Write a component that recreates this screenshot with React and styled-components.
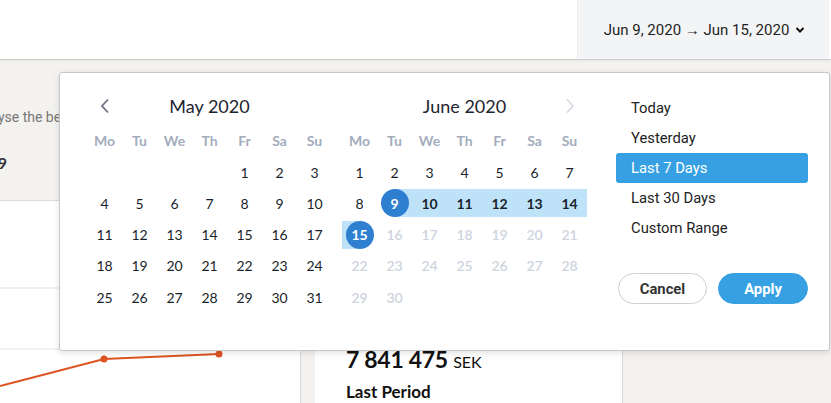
import React from "react";
import styled, { createGlobalStyle, css } from "styled-components";

const Global = createGlobalStyle`
  html, body { margin: 0; padding: 0; }
  body { background: #f4f2ee; font-family: Roboto, "Noto Sans", sans-serif; overflow: hidden; }
  * { box-sizing: border-box; }
`;

const Page = styled.div`
  position: relative;
  width: 831px;
  height: 403px;
  overflow: hidden;
  background: #f4f2ee;
`;

const Header = styled.header`
  height: 60px;
  background: #fff;
  border-bottom: 1px solid #cfcfcf;
  box-shadow: 0 1px 2px rgba(0,0,0,0.06);
  display: flex;
  justify-content: flex-end;
  padding-right: 2px;
`;

const DateToggle = styled.div`
  width: 252px;
  background: #f3f4f6;
  border-left: 1px solid #ececec;
  display: flex;
  align-items: center;
  justify-content: center;
  gap: 6px;
  font-family: Roboto, sans-serif;
  font-size: 15px;
  color: #1f1f1f;
  padding-left: 2px;
`;

const Main = styled.main`
  display: grid;
  grid-template-columns: 301px 322px 1fr;
  height: 343px;
`;

const LeftCol = styled.div`
  display: flex;
  flex-direction: column;
`;

const LeftTop = styled.div`
  height: 140px;
  padding-top: 49px;
  overflow: hidden;
`;

const Intro = styled.p`
  margin: 0;
  font-size: 14px;
  color: #777;
  white-space: nowrap;
  text-indent: -30px;
`;

const KPI = styled.p`
  margin: 28px 0 0;
  font-family: Lato, sans-serif;
  font-weight: 700;
  font-size: 16px;
  color: #333;
  white-space: nowrap;
  text-indent: -34px;
`;

const ChartCard = styled.div`
  flex: 1;
  background: #fff;
  border-top: 1px solid #dcdcdc;
  border-right: 1px solid #dcdcdc;
`;

const MidCol = styled.div`
  padding: 15px 0 0 14px;
  display: flex;
`;

const StatCard = styled.div`
  flex: 1;
  background: #fff;
  border-right: 1px solid #d6d6d6;
  padding: 270px 0 0 31px;
  font-family: Lato, sans-serif;
  color: #111;
`;

const Amount = styled.div`
  font-size: 23px;
  font-weight: 700;
  line-height: 28px;
  letter-spacing: -0.3px;
  span { font-size: 16px; font-weight: 400; letter-spacing: 0; }
`;

const StatLabel = styled.div`
  margin-top: 4px;
  font-size: 17px;
  font-weight: 700;
  line-height: 24px;
`;

const Popup = styled.div`
  position: absolute;
  top: 72px;
  left: 59px;
  width: 771px;
  height: 279px;
  background: #fff;
  border: 1px solid #c8c8c8;
  border-radius: 3px;
  box-shadow: 0 2px 6px rgba(0,0,0,0.12);
  display: flex;
  padding: 19px 21px 0 27px;
`;

const Calendars = styled.div`
  display: flex;
  gap: 10px;
`;

const Month = styled.div`
  width: 245px;
  font-family: Lato, sans-serif;
`;

const MonthHead = styled.div`
  height: 28px;
  display: flex;
  align-items: center;
  justify-content: space-between;
  padding: 0 10px;
  font-size: 18px;
  color: #1e2430;
`;

const Nav = styled.span`
  width: 15px;
  display: flex;
  justify-content: center;
  color: ${p => (p.$disabled ? "#d3d8df" : "#6b7280")};
`;

const Week = styled.div`
  display: grid;
  grid-template-columns: repeat(7, 35px);
  margin-top: 6px;
  margin-bottom: 4px;
`;

const WeekDay = styled.div`
  height: 28px;
  display: flex;
  align-items: center;
  justify-content: center;
  font-size: 14px;
  font-weight: 700;
  color: #a3adbd;
`;

const Days = styled.div`
  display: grid;
  grid-template-columns: repeat(7, 35px);
  grid-auto-rows: 28px;
  row-gap: 3.25px;
`;

const Day = styled.div`
  position: relative;
  display: flex;
  align-items: center;
  justify-content: center;
  font-size: 14px;
  color: ${p => (p.$muted ? "#cdd4de" : "#1a1f2b")};
  font-weight: ${p => (p.$muted ? 600 : 400)};
  ${p => p.$range && css`
    background: #bee3f8;
    font-weight: 700;
  `}
  ${p => p.$half === "right" && css`
    background: linear-gradient(to right, transparent 50%, #bee3f8 50%);
  `}
  ${p => p.$half === "left" && css`
    background: linear-gradient(to right, #bee3f8 50%, transparent 50%);
  `}
`;

const Dot = styled.span`
  width: 28px;
  height: 28px;
  border-radius: 50%;
  background: #2f7fd1;
  color: #fff;
  font-weight: 700;
  display: flex;
  align-items: center;
  justify-content: center;
`;

const Side = styled.div`
  margin-left: 29px;
  padding-top: 1px;
  width: 193px;
  display: flex;
  flex-direction: column;
  font-family: Roboto, sans-serif;
`;

const Ranges = styled.ul`
  list-style: none;
  margin: 0;
  padding: 0;
`;

const RangeItem = styled.li`
  height: 30px;
  display: flex;
  align-items: center;
  padding-left: 15px;
  font-size: 14.8px;
  border-radius: 3px;
  color: ${p => (p.$active ? "#fff" : "#222")};
  background: ${p => (p.$active ? "#36a0e3" : "transparent")};
`;

const Buttons = styled.div`
  margin-top: 30px;
  display: flex;
  gap: 11px;
  padding-left: 2px;
`;

const Btn = styled.button`
  height: 31px;
  width: ${p => p.$w}px;
  border-radius: 16px;
  font-family: Roboto, sans-serif;
  font-weight: 700;
  font-size: 14.8px;
  cursor: pointer;
  ${p => p.$primary ? css`
    background: #36a0e3;
    border: 1px solid #36a0e3;
    color: #fff;
  ` : css`
    background: #fff;
    border: 1px solid #cfcfcf;
    color: #333;
  `}
`;

const weekdays = ["Mo", "Tu", "We", "Th", "Fr", "Sa", "Su"];

function MonthView({ title, offset, count, dayProps, prevDisabled, nextDisabled, showPrev, showNext }) {
  const cells = [];
  for (let i = 0; i < offset; i++) cells.push(<Day key={"e" + i} />);
  for (let d = 1; d <= count; d++) {
    const p = dayProps ? dayProps(d) : {};
    cells.push(
      <Day key={d} $muted={p.muted} $range={p.range} $half={p.half}>
        {p.dot ? <Dot>{d}</Dot> : d}
      </Day>
    );
  }
  return (
    <Month>
      <MonthHead>
        <Nav $disabled={prevDisabled} style={{ visibility: showPrev ? "visible" : "hidden" }}>
          <svg width="10" height="16" viewBox="0 0 10 16"><path d="M8 1.5 2 8l6 6.5" fill="none" stroke="currentColor" strokeWidth="1.8" /></svg>
        </Nav>
        <span>{title}</span>
        <Nav $disabled={nextDisabled} style={{ visibility: showNext ? "visible" : "hidden" }}>
          <svg width="10" height="16" viewBox="0 0 10 16"><path d="M2 1.5 8 8l-6 6.5" fill="none" stroke="currentColor" strokeWidth="1.5" /></svg>
        </Nav>
      </MonthHead>
      <Week>{weekdays.map(w => <WeekDay key={w}>{w}</WeekDay>)}</Week>
      <Days>{cells}</Days>
    </Month>
  );
}

export default function App() {
  const june = d => {
    if (d === 9) return { dot: true, half: "right" };
    if (d === 15) return { dot: true, half: "left" };
    if (d > 9 && d < 15) return { range: true };
    if (d > 15) return { muted: true };
    return {};
  };
  return (
    <Page>
      <Global />
      <Header>
        <DateToggle>
          <span>Jun 9, 2020 → Jun 15, 2020</span>
          <svg width="10" height="8" viewBox="0 0 10 8"><path d="M1.5 2 5 5.5 8.5 2" fill="none" stroke="#111" strokeWidth="2" /></svg>
        </DateToggle>
      </Header>
      <Main>
        <LeftCol>
          <LeftTop>
            <Intro>Analyse the best</Intro>
            <KPI>1 249</KPI>
          </LeftTop>
          <ChartCard>
            <svg width="300" height="202" viewBox="0 0 300 202">
              <line x1="0" y1="87" x2="300" y2="87" stroke="#e3e3e3" />
              <line x1="0" y1="148" x2="300" y2="148" stroke="#e3e3e3" />
              <polyline points="0,185 104,158 219,153" fill="none" stroke="#dd5421" strokeWidth="2" />
              <circle cx="104" cy="158" r="3.5" fill="#dd5421" />
              <circle cx="219" cy="153" r="3.5" fill="#dd5421" />
            </svg>
          </ChartCard>
        </LeftCol>
        <MidCol>
          <StatCard>
            <Amount>7 841 475 <span>SEK</span></Amount>
            <StatLabel>Last Period</StatLabel>
          </StatCard>
        </MidCol>
        <div />
      </Main>
      <Popup>
        <Calendars>
          <MonthView title="May 2020" offset={4} count={31} showPrev showNext={false} />
          <MonthView title="June 2020" offset={0} count={30} dayProps={june} showPrev={false} showNext nextDisabled />
        </Calendars>
        <Side>
          <Ranges>
            <RangeItem>Today</RangeItem>
            <RangeItem>Yesterday</RangeItem>
            <RangeItem $active>Last 7 Days</RangeItem>
            <RangeItem>Last 30 Days</RangeItem>
            <RangeItem>Custom Range</RangeItem>
          </Ranges>
          <Buttons>
            <Btn $w={89}>Cancel</Btn>
            <Btn $w={90} $primary>Apply</Btn>
          </Buttons>
        </Side>
      </Popup>
    </Page>
  );
}
